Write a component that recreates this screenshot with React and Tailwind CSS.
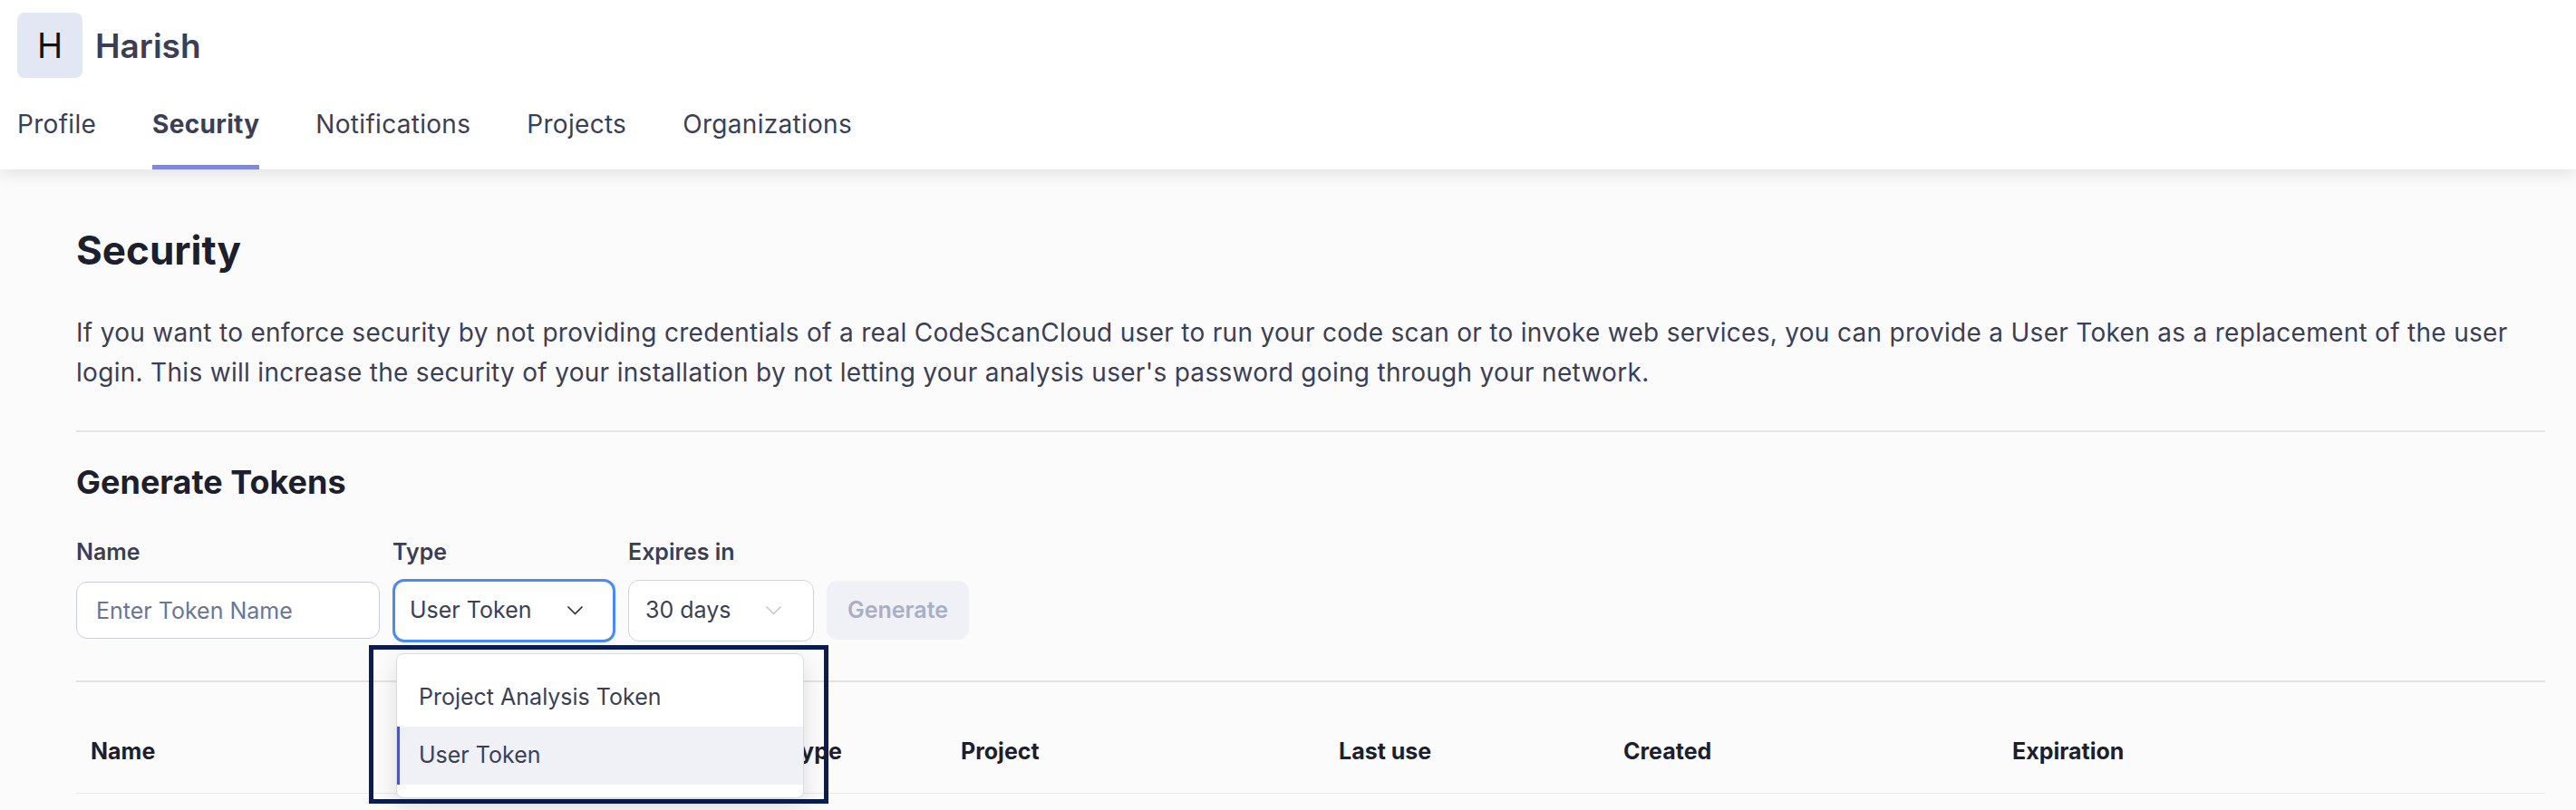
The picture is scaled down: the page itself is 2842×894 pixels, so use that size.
import React from 'react';

const TABS = ['Profile', 'Security', 'Notifications', 'Projects', 'Organizations'];
const COLUMNS = ['Name', 'Type', 'Project', 'Last use', 'Created', 'Expiration', ''];

function Chevron({ className }) {
  return (
    <svg width="17" height="10" viewBox="0 0 17 10" fill="none" className={className}>
      <polyline points="1,1 8.5,8.5 16,1" stroke="currentColor" strokeWidth="1.7" strokeLinecap="round" strokeLinejoin="round" />
    </svg>
  );
}

export default function App() {
  return (
    <div className="min-h-screen bg-[#fbfbfc] font-['Inter',sans-serif] text-[#3b3f55]">
      <header className="relative z-10 bg-white px-[19px] pt-[14px] shadow-[0_6px_16px_rgba(0,0,0,0.09)]">
        <div className="flex items-center gap-[14px]">
          <div className="flex h-[72px] w-[72px] items-center justify-center rounded-[8px] bg-[#e3e7f3] text-[38px] text-[#111]">
            H
          </div>
          <span className="text-[37px] font-semibold leading-none">Harish</span>
        </div>
        <nav className="flex gap-[62px] tracking-[0.3px]">
          {TABS.map((tab) => (
            <div
              key={tab}
              className={
                tab === 'Security'
                  ? 'border-b-[5px] border-[#7f89d8] pb-[28px] pt-[34px] text-[28px] font-bold leading-[34px]'
                  : 'border-b-[5px] border-transparent pb-[28px] pt-[34px] text-[28px] leading-[34px]'
              }
            >
              {tab}
            </div>
          ))}
        </nav>
      </header>

      <main className="pl-[84px] pr-[34px] pt-[63px]">
        <h1 className="text-[44px] font-bold leading-[1.2] text-[#1c1f2e]">Security</h1>
        <p className="mt-[42px] text-[28px] leading-[44px] tracking-[0.3px]">
          If you want to enforce security by not providing credentials of a real CodeScanCloud user to run your code
          scan or to invoke web services, you can provide a User Token as a replacement of the user login. This will
          increase the security of your installation by not letting your analysis user's password going through your
          network.
        </p>
        <div className="mt-[42px] h-[2px] bg-[#e2e2e4]" />

        <h2 className="mt-[34px] text-[36px] font-bold leading-[1.2] text-[#1c1f2e]">Generate Tokens</h2>

        <div className="mt-[39px] flex gap-[14px]">
          <div className="flex flex-col gap-[14px]">
            <label className="text-[25px] font-semibold leading-[32px]">Name</label>
            <div className="flex h-[70px] items-center">
              <input
                placeholder="Enter Token Name"
                className="h-[63px] w-[335px] rounded-[12px] border border-[#c9cfe2] bg-white px-[21px] text-[25px] outline-none placeholder:text-[#6b7594]"
              />
            </div>
          </div>

          <div className="flex flex-col gap-[14px]">
            <label className="text-[25px] font-semibold leading-[32px]">Type</label>
            <div className="relative flex h-[70px] items-center">
              <div className="flex h-[70px] w-[246px] items-center justify-between rounded-[13px] border-[3px] border-[#4a8af4] bg-white pl-[16px] pr-[33px] text-[25px]">
                <span>User Token</span>
                <Chevron className="text-[#2a2d3a]" />
              </div>

              <div className="absolute left-[-26px] top-[73px] z-20 h-[175px] w-[507px] border-[5px] border-[#0b1d50]">
                <div className="absolute left-[25px] top-[4px] w-[450px] rounded-[8px] border border-[#dcdcdf] bg-white pb-[14px] pt-[16px] shadow-[0_10px_24px_rgba(0,0,0,0.12)]">
                  <div className="flex h-[64px] items-center pl-[24px] text-[25px]">Project Analysis Token</div>
                  <div className="flex h-[64px] items-center border-l-[3px] border-[#4b55b8] bg-[#f0f1f6] pl-[21px] text-[25px]">
                    User Token
                  </div>
                </div>
              </div>
            </div>
          </div>

          <div className="flex flex-col gap-[14px]">
            <label className="text-[25px] font-semibold leading-[32px]">Expires in</label>
            <div className="flex h-[70px] items-center">
              <div className="flex h-[68px] w-[205px] items-center justify-between rounded-[12px] border border-[#d3d4d8] bg-white pl-[18px] pr-[35px] text-[25px]">
                <span>30 days</span>
                <Chevron className="text-[#c5c7d0]" />
              </div>
            </div>
          </div>

          <div className="flex flex-col justify-end">
            <div className="flex h-[70px] items-center">
              <button className="h-[65px] w-[157px] rounded-[12px] bg-[#f0f1f7] text-[25px] font-semibold text-[#a8aec5]">
                Generate
              </button>
            </div>
          </div>
        </div>

        <div className="mt-[42px] h-[2px] bg-[#e2e2e4]" />

        <div className="mt-[31px] grid h-[92px] grid-cols-[768px_192px_417px_314px_429px_412px_1fr] items-center border-b border-[#e9e9eb]">
          {COLUMNS.map((col, i) => (
            <div key={i} className="pl-4 text-[25px] font-bold text-[#1c1f2e]">
              {col}
            </div>
          ))}
        </div>
      </main>
    </div>
  );
}
